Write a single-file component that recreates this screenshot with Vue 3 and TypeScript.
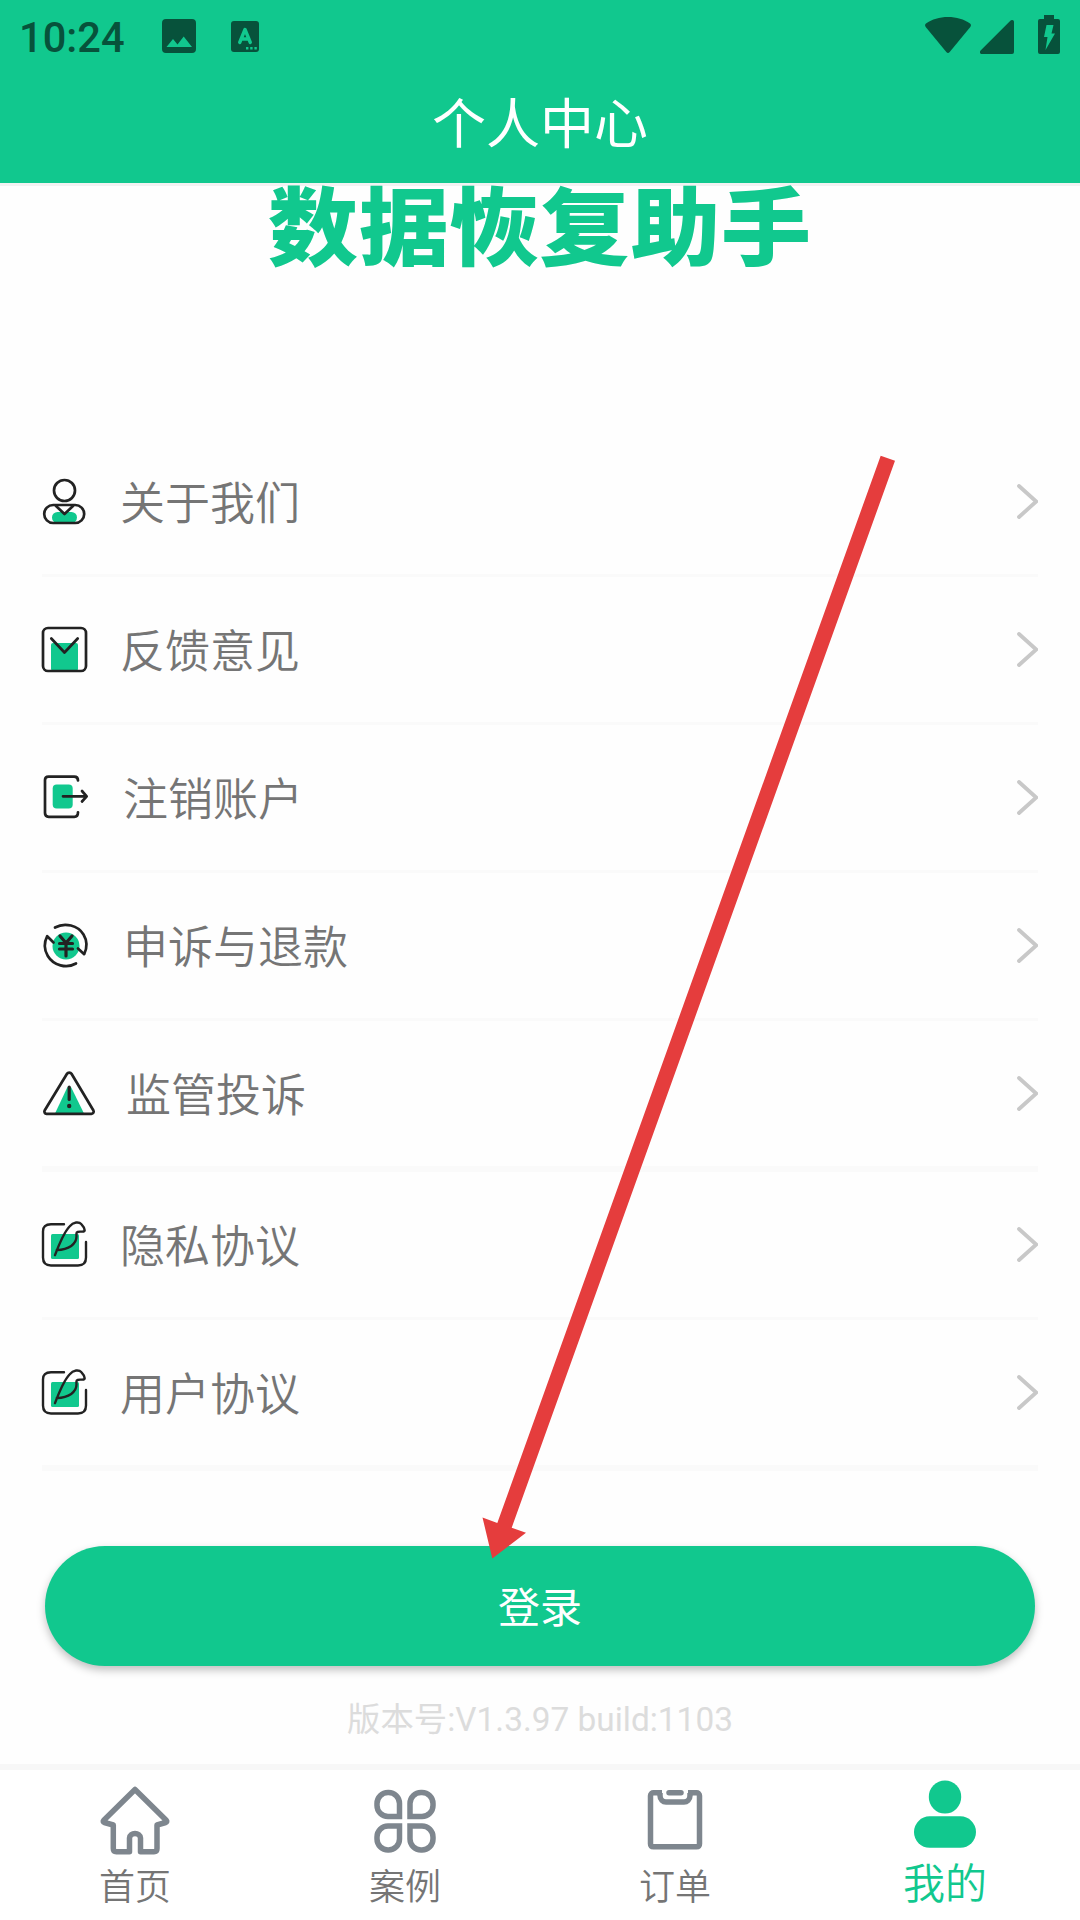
<script setup lang="ts">
import { ref } from 'vue'

type IconName = 'about' | 'feedback' | 'logout' | 'refund' | 'warning' | 'pen'
interface MenuItem {
  label: string
  icon: IconName
  iconWidth: number
  gap: number
  thick?: boolean
}

const menu: MenuItem[] = [
  { label: '关于我们', icon: 'about', iconWidth: 45, gap: 33 },
  { label: '反馈意见', icon: 'feedback', iconWidth: 45, gap: 33 },
  { label: '注销账户', icon: 'logout', iconWidth: 47, gap: 34 },
  { label: '申诉与退款', icon: 'refund', iconWidth: 47, gap: 34 },
  { label: '监管投诉', icon: 'warning', iconWidth: 54, gap: 30, thick: true },
  { label: '隐私协议', icon: 'pen', iconWidth: 45, gap: 33 },
  { label: '用户协议', icon: 'pen', iconWidth: 45, gap: 33, thick: true },
]

const tabs = [
  { key: 'home', label: '首页' },
  { key: 'cases', label: '案例' },
  { key: 'orders', label: '订单' },
  { key: 'mine', label: '我的' },
]
const active = ref('mine')
</script>

<template>
  <div class="screen">
    <header class="header">
      <div class="status">
        <span class="clock">10:24</span>
        <svg class="st-image" width="34" height="34" viewBox="0 0 34 34">
          <path fill="#07523b" fill-rule="evenodd" d="M4 0h26a4 4 0 0 1 4 4v26a4 4 0 0 1-4 4H4a4 4 0 0 1-4-4V4a4 4 0 0 1 4-4zM4.500 28h25.500L21.700 17.500l-6.200 8-4.500-5.500z" />
        </svg>
        <svg class="st-a" width="28" height="31" viewBox="0 0 28 31">
          <rect width="28" height="31" rx="3" fill="#07523b" />
          <path d="M8.700 21.500 14 8.500l5.300 13M10.700 18h6.600" fill="none" stroke="#11c88e" stroke-width="3.400" stroke-linecap="round" stroke-linejoin="round" />
          <path d="M15 26h2.400v2.400H15zM19.200 26h2.400v2.400h-2.400zM23.400 26h2.400v2.400h-2.400z" fill="#11c88e" />
        </svg>
        <span class="grow"></span>
        <svg class="st-wifi" width="46" height="36" viewBox="0 0 46 36">
          <path fill="#07523b" d="M1 6.600C7 2.300 14.500 0 23 0s16 2.300 22 6.600c1.200.9 1.200 2.200.3 3.300L24.700 35c-1 1.200-2.400 1.200-3.400 0L.7 9.900C-.2 8.800-.2 7.500 1 6.600z" />
        </svg>
        <svg class="st-signal" width="34" height="34" viewBox="0 0 34 34">
          <path fill="#07523b" d="M34 2v30a2 2 0 0 1-2 2H2c-2 0-2.700-2-1.400-3.400l30-30C32-.7 34 .2 34 2z" />
        </svg>
        <svg class="st-battery" width="22" height="39" viewBox="0 0 22 39">
          <path fill="#07523b" d="M6 0h10v4h4a2 2 0 0 1 2 2v31a2 2 0 0 1-2 2H2a2 2 0 0 1-2-2V6a2 2 0 0 1 2-2h4z" />
          <path fill="#11c88e" d="M8.500 10h7l-2 8.500H17L7.500 35l2-13H6z" />
        </svg>
      </div>
      <h1 class="title">个人中心</h1>
    </header>

    <main class="content">
      <svg class="logo" width="538" height="81" viewBox="0 0 538 81">
        <text x="-3 88 178 268.500 359.500 450" y="77" transform="scale(1 .95)">数据恢复助手</text>
      </svg>

      <ul class="menu">
        <li v-for="item in menu" :key="item.label" class="row" :class="{ thick: item.thick }">
          <svg :width="item.iconWidth" height="45" :viewBox="`0 0 ${item.iconWidth} 45`" class="icon" :style="{ marginRight: item.gap + 'px' }">
            <template v-if="item.icon === 'about'">
              <rect x="10" y="33" width="25" height="11" rx="5.500" class="fill" />
              <circle cx="22.500" cy="11.500" r="10.500" class="line" />
              <rect x="2.200" y="26" width="40" height="18" rx="9" class="line" />
              <path d="M14 27l8.500 8 8.500-8" class="line" />
            </template>
            <template v-else-if="item.icon === 'feedback'">
              <rect x="9" y="16" width="27" height="28" rx="2" class="fill" />
              <rect x="1" y="1" width="43" height="43" rx="5" class="line" />
              <path d="M9.300 11.500 22.500 25.500 35.700 11.500" class="line" />
            </template>
            <template v-else-if="item.icon === 'logout'">
              <rect x="10.700" y="9.500" width="20" height="24" rx="4" class="fill" />
              <path d="M36 5.500c0-2.500-1-3.900-3.700-3.900H6.500C4 1.600 3 3 3 5v33c0 2.500 1.200 3.800 3.700 3.800h25.600c2.500 0 3.700-1.500 3.700-4.500M21 21.300h23M40 16l4.700 5.300L40 26.500" class="line" />
            </template>
            <template v-else-if="item.icon === 'refund'">
              <circle cx="24" cy="23" r="13.500" class="fill" />
              <path d="M13 4.500C23-1 36 2.500 41.500 11.500c3.600 6 3.600 13.500.7 19.700L36 25.500M34 40.500C24.500 46 11.500 42.500 5.800 33 2 26.700 2 19.500 5.200 13.200L11.500 19.500" class="line" />
              <path d="M18 13l6 7 6-7M17.500 20.500h13M17.500 26h13M24 20.500V33" class="line bold" />
            </template>
            <template v-else-if="item.icon === 'warning'">
              <path d="M25 17c1-2 3.500-2 4.500 0L42 42.500H13z" class="fill" />
              <path d="M25 2.800c1-1.700 3.500-1.700 4.500 0l21.800 36.500c1 1.700 0 3.500-1.800 3.500H4.500c-1.800 0-2.700-1.800-1.700-3.500z" class="line" />
              <path d="M27.200 16v12.500" class="line bold" />
              <circle cx="27.200" cy="35" r="2.200" fill="#222" />
            </template>
            <template v-else>
              <rect x="9" y="12" width="28" height="25" rx="1.500" class="fill" />
              <path d="M22 2.200H9C3.500 2.200 1 5 1 9.500v26c0 5 2.500 8 8 8h27c5 0 8-2.500 8-8V20" class="line thin" />
              <path d="M13 33.200C17 22.500 21.500 11 27.500 4.500 31.500-.3 37-.5 39.500 2.300c2 2 3 4 3.200 6 0 1.700-2.200 1.300-4.700 1.300-4.300 0-3.600 1.500-3.500 5C34.500 22 27 27.500 14.700 28.100" class="line thin" />
            </template>
          </svg>
          <span class="label">{{ item.label }}</span>
          <svg class="chevron" width="21" height="35" viewBox="0 0 21 35">
            <path d="M2 2 19.200 17.500 2 33" fill="none" stroke="#c8c8c8" stroke-width="3.800" stroke-linecap="round" />
          </svg>
        </li>
      </ul>

      <button class="login" type="button">登录</button>
      <p class="version">版本号:V1.3.97 build:1103</p>
    </main>

    <nav class="tabs">
      <a v-for="tab in tabs" :key="tab.key" class="tab" :class="{ active: tab.key === active }" @click="active = tab.key">
        <svg width="70" height="80" viewBox="0 0 70 80" class="tab-icon">
          <path v-if="tab.key === 'home'" class="tline" stroke-linejoin="round" d="M35 19.500 3.800 50.200c-1 1-.7 2 .5 2.300L13.300 55v23.500c0 2 1 3.200 3 3.200H29.500V68c0-6 11-6 11 0v13.700H54c2 0 3-1.200 3-3.200V55l8.700-2.500c1.200-.3 1.500-1.300.5-2.300z" />
          <g v-else-if="tab.key === 'cases'" class="tline">
            <path d="M29.500 46.500H18a11 11 0 0 1-11-11V33.500a11 11 0 0 1 11-11h.5a11 11 0 0 1 11 11z" />
            <path d="M40 46.500V33.500a11 11 0 0 1 11-11h1a11 11 0 0 1 11 11v2a11 11 0 0 1-11 11z" />
            <path d="M29.500 56V69a11 11 0 0 1-11 11H18a11 11 0 0 1-11-11V67a11 11 0 0 1 11-11z" />
            <path d="M40 56h12a11 11 0 0 1 11 11v2a11 11 0 0 1-11 11h-1a11 11 0 0 1-11-11z" />
          </g>
          <g v-else-if="tab.key === 'orders'" class="tline">
            <path d="M22 22.800h-8.500c-1.500 0-3 1-3 3v48c0 2 1 3 3 3h43c2 0 3-1 3-3v-48c0-2-1.500-3-3-3H48" />
            <path d="M20 23v2.500c0 4 3 6.500 6 6.500h18c3 0 6-2.500 6-6.500V23" />
            <path d="M29 22.800h12" stroke-linecap="round" />
          </g>
          <g v-else fill="#11c88e">
            <ellipse cx="35" cy="27" rx="16.200" ry="16.500" />
            <rect x="4" y="46.300" width="62" height="31.500" rx="15.700" />
          </g>
        </svg>
        <span class="tab-label">{{ tab.label }}</span>
      </a>
    </nav>

    <svg class="pointer" width="414" height="1104" viewBox="0 0 414 1104">
      <path fill="#e53d3d" d="M398.700.7 413 5.700 29.700 1072.700l14.300 5L10.300 1103.400.5 1062.500l14.800 5.500z" />
    </svg>
  </div>
</template>

<style>
body { margin: 0; }
</style>

<style scoped>
.screen {
  position: relative;
  display: flex;
  flex-direction: column;
  width: 1080px;
  height: 1920px;
  overflow: hidden;
  background: #fefefe;
  font-family: Roboto, "Noto Sans CJK SC", sans-serif;
  font-weight: 350;
  color: #757575;
}
.header {
  flex: none;
  height: 183px;
  background: #11c88e;
  border-bottom: 3px solid #f2f2f2;
}
.status {
  display: flex;
  align-items: flex-start;
  height: 72px;
  padding: 0 20px 0 19px;
  color: #07523b;
}
.clock {
  width: 143px;
  margin-top: 13px;
  font-size: 41.6px;
  line-height: 50px;
  font-weight: 500;
}
.grow { flex: 1; }
.st-image { margin-top: 19px; }
.st-a { margin: 21px 0 0 35px; }
.st-wifi { margin-top: 17px; }
.st-signal { margin: 20px 0 0 9px; }
.st-battery { margin: 15px 0 0 24px; }
.title {
  margin: 0;
  font-size: 54px;
  line-height: 108px;
  font-weight: 400;
  text-align: center;
  color: #fff;
}
.content {
  flex: none;
  display: flex;
  flex-direction: column;
  height: 1578px;
}
.logo {
  display: block;
  flex: none;
  align-self: center;
  overflow: visible;
}
.logo text {
  font-family: "Noto Sans CJK SC", sans-serif;
  font-size: 90px;
  font-weight: 900;
  fill: #11c88e;
}
.menu {
  list-style: none;
  margin: 162px 42px 0;
  padding: 0;
}
.row {
  display: flex;
  align-items: center;
  height: 145px;
  border-bottom: 3px solid #fafafa;
}
.row.thick { border-bottom-width: 6px; }
.icon { flex: none; overflow: visible; }
.line {
  fill: none;
  stroke: #222;
  stroke-width: 2.7;
  stroke-linecap: round;
  stroke-linejoin: round;
}
.line.thin { stroke-width: 2.4; }
.line.bold { stroke-width: 3.2; }
.fill { fill: #11c88e; }
.label {
  flex: 1;
  padding-top: 7px;
  font-size: 45px;
  line-height: 60px;
}
.login {
  flex: none;
  height: 120px;
  margin: 75px 45px 0;
  padding: 5px 0 0;
  border: 0;
  border-radius: 60px;
  background: #11c88e;
  color: #fff;
  font-family: inherit;
  font-weight: 400;
  font-size: 42px;
  line-height: 100px;
  box-shadow: 0 4px 9px rgba(0, 0, 0, 0.25);
}
.version {
  margin: 33px 0 0;
  font-size: 33.4px;
  line-height: 42px;
  font-weight: 400;
  text-align: center;
  color: #dcdcdc;
}
.tabs {
  flex: none;
  display: flex;
  height: 150px;
  border-top: 6px solid #f7f7f7;
  background: #fff;
}
.tab {
  flex: 1;
  display: flex;
  flex-direction: column;
  align-items: center;
}
.tab-icon { flex: none; overflow: visible; }
.tline {
  fill: none;
  stroke: #7e868e;
  stroke-width: 5.5;
}
.tab-label {
  margin-top: 16px;
  font-size: 36px;
  line-height: 44px;
}
.active .tab-label {
  margin-top: 13px;
  font-size: 42px;
  color: #11c88e;
}
.pointer {
  position: absolute;
  left: 482px;
  top: 455px;
}
</style>
